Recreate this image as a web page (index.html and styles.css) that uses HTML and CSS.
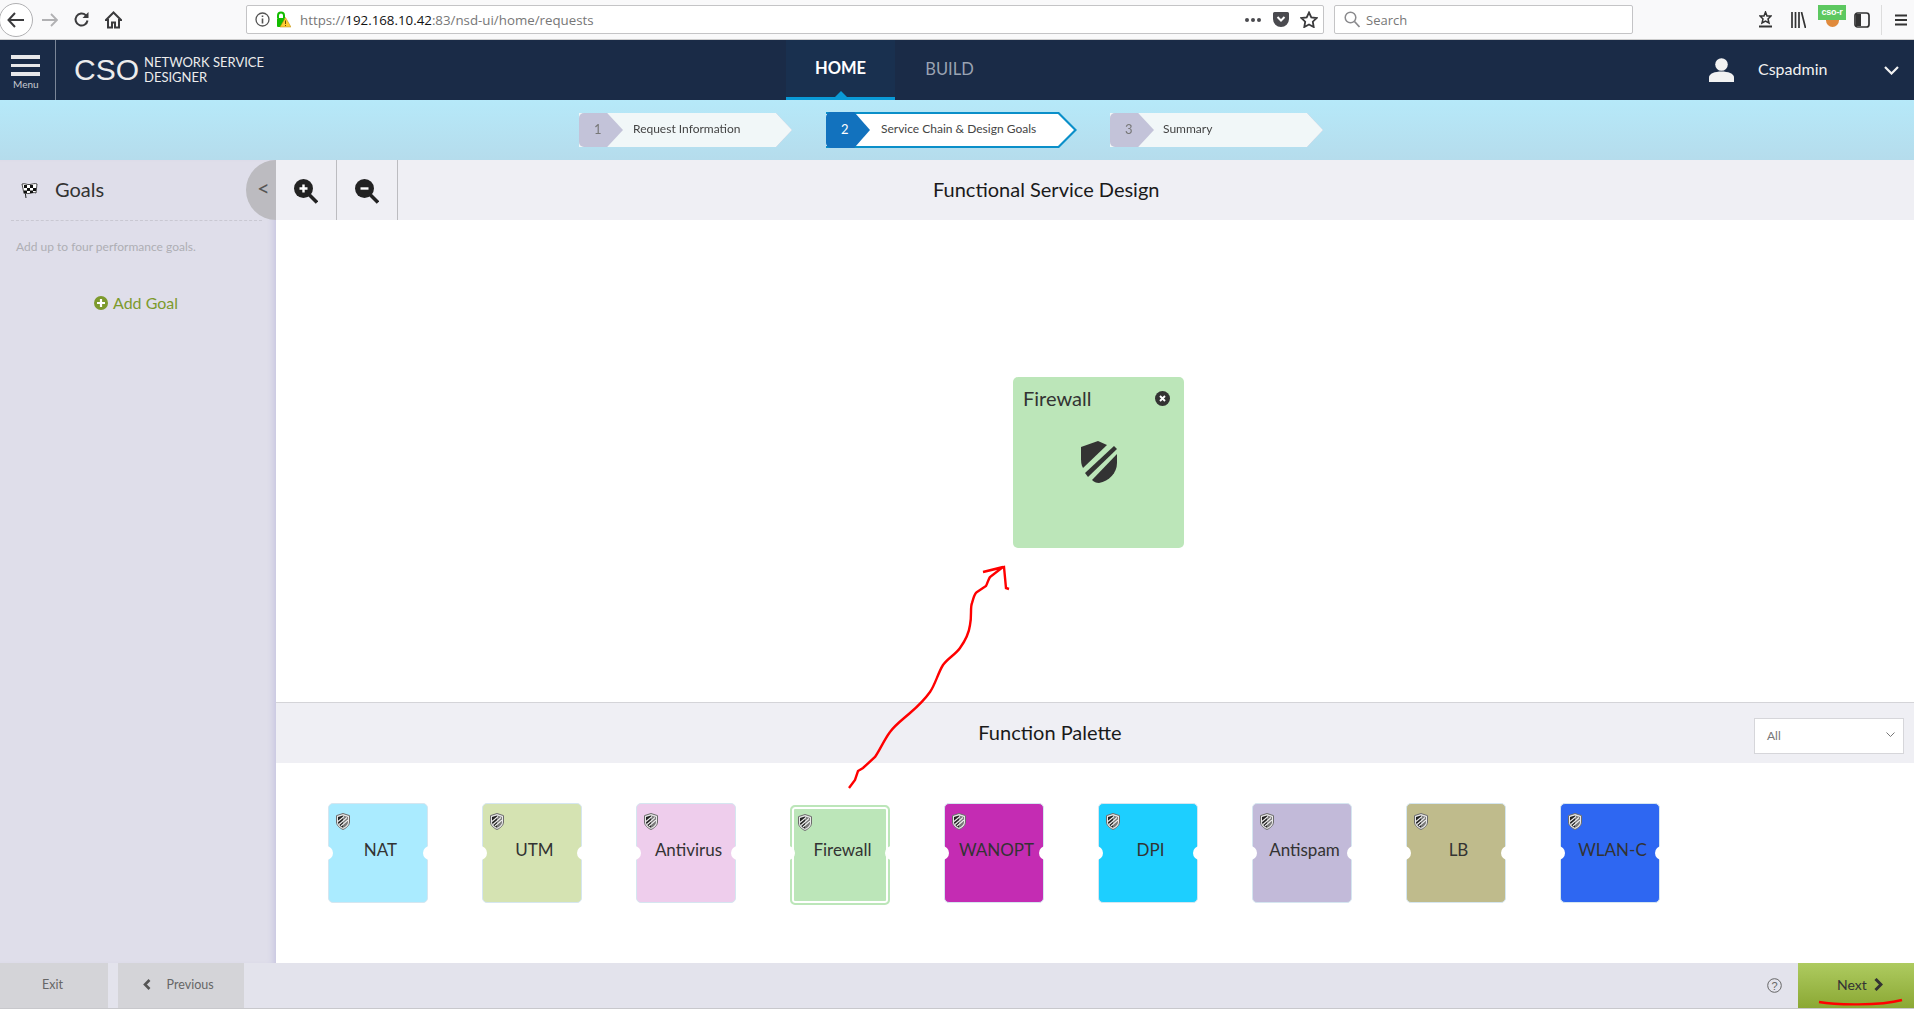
FILE: index.html
```html
<!DOCTYPE html>
<html lang="en">
<head>
<meta charset="utf-8">
<title>CSO Network Service Designer</title>
<link rel="stylesheet" href="styles.css">
</head>
<body>
<svg width="0" height="0" class="defs">
  <defs>
    <symbol id="mini-shield" viewBox="0 0 14 17">
      <path d="M7 .5 13.500 2.600V9c0 3.400-3 6-6.500 7.500C3.500 15 .5 12.400.5 9V2.600Z" fill="#e8e8e8" stroke="#6b6b6b"/>
      <path d="M7 2.500 2 4v5c0 2.500 2.200 4.400 5 5.800Z" fill="#222"/>
      <path d="M7 2.500 12 4v5c0 2.500-2.200 4.400-5 5.800Z" fill="#777"/>
      <path d="M3 11.500 11 4.500M5 13 12 7M2 8.500 8 3.500" stroke="#eee" stroke-width="1.100" fill="none"/>
    </symbol>
  </defs>
</svg>

<div class="browser">
  <div class="back-btn">
    <svg width="18" height="16" viewBox="0 0 18 16"><path d="M8 1 1.500 8 8 15M2 8h15" fill="none" stroke="#3b3b3d" stroke-width="2"/></svg>
  </div>
  <svg class="fwd" width="17" height="14" viewBox="0 0 17 14"><path d="M10 1l6 6-6 6M16 7H1" fill="none" stroke="#b1b1b3" stroke-width="1.800"/></svg>
  <svg class="reload" width="17" height="17" viewBox="0 0 17 17"><path d="M14.500 9.500a6 6 0 1 1-1.700-5.200L14.500 6" fill="none" stroke="#3b3b3d" stroke-width="2"/><path d="M15.500 1v6h-6Z" fill="#3b3b3d"/></svg>
  <svg class="home" width="17" height="18" viewBox="0 0 17 18"><path d="M8.500 1.500 1 9h2v7.500h4v-5h3v5h4V9h2Z" fill="none" stroke="#3b3b3d" stroke-width="2"/></svg>
  <div class="urlbar">
    <svg class="info" width="15" height="15" viewBox="0 0 15 15"><circle cx="7.500" cy="7.500" r="6.500" fill="none" stroke="#555" stroke-width="1.300"/><path d="M7.500 6.500v5M7.500 3.500v1.600" stroke="#555" stroke-width="1.600"/></svg>
    <svg class="lock" width="15" height="17" viewBox="0 0 15 17"><path d="M2 7V4.500a3 3 0 0 1 6 0V7" fill="none" stroke="#12bc00" stroke-width="2"/><rect x="1" y="7" width="8" height="9" rx="1" fill="#12bc00"/><path d="M9.500 6.500 15 16H4Z" fill="#ffcc33" stroke="#b98a10" stroke-width=".5"/><path d="M9.500 9.500v3.500M9.500 14v1" stroke="#6b4a00" stroke-width="1"/></svg>
    <div class="url"><span class="url-dim">https://</span><span class="url-host">192.168.10.42</span><span class="url-dim">:83/nsd-ui/home/requests</span></div>
    <div class="url-dots"><i></i><i></i><i></i></div>
    <svg class="pocket" width="16" height="15" viewBox="0 0 16 15"><path d="M1.500 0h13A1.500 1.500 0 0 1 16 1.500V7A8 8 0 0 1 0 7V1.500A1.500 1.500 0 0 1 1.500 0Z" fill="#4a4a4f"/><path d="M4.500 5 8 8.500 11.500 5" fill="none" stroke="#fff" stroke-width="2"/></svg>
    <svg class="star" width="18" height="17" viewBox="0 0 18 17"><path d="M9 1.500 11.300 6.300 16.600 7 12.800 10.700 13.700 16 9 13.500 4.300 16 5.200 10.700 1.400 7 6.700 6.300Z" fill="none" stroke="#3b3b3d" stroke-width="1.800"/></svg>
  </div>
  <div class="searchbar">
    <svg width="16" height="17" viewBox="0 0 16 17"><circle cx="6.500" cy="6.500" r="5.300" fill="none" stroke="#8a8a8d" stroke-width="1.500"/><path d="M10.500 10.500 15.500 16" stroke="#8a8a8d" stroke-width="1.700"/></svg>
    <span>Search</span>
  </div>
  <div class="toolbar">
    <svg class="t-dl" width="13" height="17" viewBox="0 0 13 17"><path d="M6.500 1 8 5h4L9 8l1 4-3.500-2L3 12l1-4-3-3h4Z" fill="none" stroke="#333" stroke-width="1.500"/><path d="M0 15.500h13" stroke="#333" stroke-width="2"/></svg>
    <svg class="t-lib" width="15" height="16" viewBox="0 0 15 16"><path d="M1 0v16M4.500 0v16M8 0v16M10.500 0l4 16" stroke="#333" stroke-width="1.700" fill="none"/></svg>
    <div class="t-ext"><div class="t-badge">cso-r</div><div class="t-ext-dot"></div></div>
    <svg class="t-side" width="16" height="16" viewBox="0 0 16 16"><rect x="1" y="1" width="14" height="14" rx="2.500" fill="none" stroke="#333" stroke-width="1.700"/><rect x="2" y="2" width="5" height="12" fill="#333"/></svg>
    <div class="t-sep"></div>
    <svg class="t-menu" width="12" height="12" viewBox="0 0 12 12"><path d="M0 1.500h12M0 6h12M0 10.500h12" stroke="#333" stroke-width="2"/></svg>
  </div>
</div>

<header class="navbar">
  <div class="menu-btn">
    <div class="burger"><i></i><i></i><i></i></div>
    <div class="menu-label">Menu</div>
  </div>
  <div class="brand">
    <span class="brand-cso">CSO</span>
    <span class="brand-sub">NETWORK SERVICE<br>DESIGNER</span>
  </div>
  <nav class="tabs">
    <div class="tab tab-active">HOME</div>
    <div class="tab">BUILD</div>
  </nav>
  <div class="user">
    <svg width="25" height="24" viewBox="0 0 25 24"><circle cx="12.500" cy="6.500" r="6.300" fill="#f2f2f2"/><path d="M0 24v-4.500C0 15.500 6 13.500 12.500 13.500S25 15.500 25 19.500V24Z" fill="#f2f2f2"/></svg>
    <span class="user-name">Cspadmin</span>
    <svg class="user-chev" width="15" height="9" viewBox="0 0 15 9"><path d="M1 1l6.500 6.500L14 1" fill="none" stroke="#f2f2f2" stroke-width="2.200"/></svg>
  </div>
</header>

<div class="stepper">
  <div class="step">
    <div class="step-num">1</div>
    <div class="step-label">Request Information</div>
  </div>
  <div class="step step-current">
    <div class="step-num">2</div>
    <div class="step-label">Service Chain &amp; Design Goals</div>
  </div>
  <div class="step step-last">
    <div class="step-num">3</div>
    <div class="step-label">Summary</div>
  </div>
</div>

<div class="workspace">
  <aside class="sidebar">
    <div class="goals-head">
      <svg width="17" height="18" viewBox="0 0 17 18"><path d="M3 3 5 17" stroke="#222" stroke-width="1"/><path d="M1 3c3-1 5 1 8 .5s5-1.500 7-.5l-1 9c-2-1-4 0-7 .5S4 11.500 3 12.500Z" fill="#fff" stroke="#222" stroke-width=".8"/><path d="M3 4h3v3H3ZM9 4h3v3H9ZM6 7h3v3H6ZM12 7h3v3h-3ZM3 9.500h3v2.500H3ZM9 9.500h3v2.500H9Z" fill="#111"/></svg>
      <span class="goals-title">Goals</span>
      <div class="collapse">&lt;</div>
    </div>
    <p class="goals-help">Add up to four performance goals.</p>
    <div class="add-goal">
      <svg width="14" height="14" viewBox="0 0 14 14"><circle cx="7" cy="7" r="7" fill="#7d9a2d"/><path d="M7 3v8M3 7h8" stroke="#fff" stroke-width="2.200"/></svg>
      <span>Add Goal</span>
    </div>
  </aside>

  <main class="main">
    <div class="design-bar">
      <div class="zoom-btn">
        <svg width="24" height="25" viewBox="0 0 24 25"><circle cx="9.500" cy="9.500" r="9.500" fill="#222"/><path d="M15.500 16 23 23.500" stroke="#222" stroke-width="3.500"/><path d="M9.500 5.500v8M5.500 9.500h8" stroke="#fff" stroke-width="2.400"/></svg>
      </div>
      <div class="zoom-btn">
        <svg width="24" height="25" viewBox="0 0 24 25"><circle cx="9.500" cy="9.500" r="9.500" fill="#222"/><path d="M15.500 16 23 23.500" stroke="#222" stroke-width="3.500"/><path d="M5.500 9.500h8" stroke="#fff" stroke-width="2.400"/></svg>
      </div>
      <h2 class="section-title design-title">Functional Service Design</h2>
    </div>
    <div class="canvas">
      <div class="node">
        <div class="node-head">
          <span class="node-name">Firewall</span>
          <svg width="15" height="15" viewBox="0 0 15 15"><circle cx="7.500" cy="7.500" r="7.500" fill="#333"/><path d="M5 5l5 5M10 5l-5 5" stroke="#fff" stroke-width="1.900"/></svg>
        </div>
        <svg class="node-shield" width="36" height="42" viewBox="0 0 36 42">
          <path d="M36 13V22C36 32 28 40 18 42 15 42 13 41 11 39Z" fill="#333"/>
          <path d="M0 6 17 0 26 4 2 27C0 24 0 20 0 16Z" fill="#333"/>
          <path d="M33 5 36 8 7 36 4 32Z" fill="#333"/>
        </svg>
      </div>
    </div>
    <div class="palette-bar">
      <h2 class="section-title">Function Palette</h2>
      <div class="filter">
        <span>All</span>
        <svg width="9" height="6" viewBox="0 0 9 6"><path d="M.5.500 4.500 4.500 8.500.5" fill="none" stroke="#777" stroke-width="1"/></svg>
      </div>
    </div>
    <div class="palette">
      <div class="fn fn-nat"><svg class="fn-icon"><use href="#mini-shield"/></svg><span>NAT</span></div>
      <div class="fn fn-utm"><svg class="fn-icon"><use href="#mini-shield"/></svg><span>UTM</span></div>
      <div class="fn fn-av"><svg class="fn-icon"><use href="#mini-shield"/></svg><span>Antivirus</span></div>
      <div class="fn fn-fw"><svg class="fn-icon"><use href="#mini-shield"/></svg><span>Firewall</span></div>
      <div class="fn fn-wan"><svg class="fn-icon"><use href="#mini-shield"/></svg><span>WANOPT</span></div>
      <div class="fn fn-dpi"><svg class="fn-icon"><use href="#mini-shield"/></svg><span>DPI</span></div>
      <div class="fn fn-as"><svg class="fn-icon"><use href="#mini-shield"/></svg><span>Antispam</span></div>
      <div class="fn fn-lb"><svg class="fn-icon"><use href="#mini-shield"/></svg><span>LB</span></div>
      <div class="fn fn-wlan"><svg class="fn-icon"><use href="#mini-shield"/></svg><span>WLAN-C</span></div>
    </div>
  </main>
</div>

<footer class="footer">
  <div class="foot-btn foot-exit">Exit</div>
  <div class="foot-btn foot-prev">
    <svg width="8" height="11" viewBox="0 0 8 11"><path d="M6.500 1 2 5.500 6.500 10" fill="none" stroke="#555" stroke-width="2.600"/></svg>
    <span>Previous</span>
  </div>
  <svg class="help" width="15" height="15" viewBox="0 0 15 15"><circle cx="7.500" cy="7.500" r="6.800" fill="none" stroke="#666" stroke-width="1"/><text x="7.500" y="11.500" text-anchor="middle" class="help-q">?</text></svg>
  <div class="foot-next">
    <span>Next</span>
    <svg width="9" height="13" viewBox="0 0 9 13"><path d="M1.500 1 7 6.500 1.500 12" fill="none" stroke="#333" stroke-width="3"/></svg>
  </div>
</footer>

<svg class="ink" width="1914" height="1010" viewBox="0 0 1914 1010">
  <path d="M849 788 855 780 858 771 863 768 875 757C880 750 884 740 890 732 895 725 902 720 910 713 917 707 925 699 930 692 935 685 938 673 943 665 948 658 955 655 960 648 965 641 969 633 970 625 972 615 970 608 972 603 974 597 974 594 977 592L986 586C988 582 988 580 990 577L1003 567 983 572 1004 567 1006 588 1009 589" fill="none" stroke="#f00" stroke-width="2.400"/>
  <path d="M1819 1002C1835 1005 1880 1006 1902 1000" fill="none" stroke="#f00" stroke-width="2.400"/>
</svg>
</body>
</html>
```
FILE: styles.css
```css
* { box-sizing: border-box; }
html, body { margin: 0; padding: 0; }
body {
  width: 1914px;
  height: 1010px;
  overflow: hidden;
  position: relative;
  background: #fff;
  font-family: "Lato", "Liberation Sans", sans-serif;
  color: #333;
  display: flex;
  flex-direction: column;
}
.defs { position: absolute; }

/* browser chrome */
.browser {
  height: 40px;
  flex: none;
  display: flex;
  align-items: center;
  background: #f9f9fa;
  border-bottom: 1px solid #ccc;
  position: relative;
}
.back-btn {
  width: 34px;
  height: 34px;
  margin-left: -1px;
  border: 1px solid #b1b1b3;
  border-radius: 50%;
  background: #fff;
  display: flex;
  align-items: center;
  justify-content: center;
  flex: none;
}
.fwd { margin-left: 8px; flex: none; }
.reload { margin-left: 15px; flex: none; }
.home { margin-left: 15px; flex: none; }
.urlbar {
  margin-left: 124px;
  width: 1078px;
  height: 29px;
  flex: none;
  background: #fff;
  border: 1px solid #c4c4c6;
  border-radius: 2px;
  display: flex;
  align-items: center;
  padding-left: 8px;
}
.lock { margin-left: 6px; }
.url {
  margin-left: 9px;
  font-family: "Open Sans", "Liberation Sans", sans-serif;
  font-size: 13.300px;
  white-space: nowrap;
  flex: 1;
}
.url-dim { color: #777; }
.url-host { color: #111; }
.url-dots { display: flex; gap: 2px; margin-right: 12px; }
.url-dots i { display: block; width: 4px; height: 4px; border-radius: 50%; background: #4a4a4f; }
.pocket { margin-right: 11px; }
.star { margin-right: 5px; }
.searchbar {
  margin-left: 10px;
  width: 299px;
  height: 29px;
  flex: none;
  background: #fff;
  border: 1px solid #c4c4c6;
  border-radius: 2px;
  display: flex;
  align-items: center;
  gap: 6px;
  padding-left: 9px;
  font-family: "Open Sans", "Liberation Sans", sans-serif;
  font-size: 13px;
  color: #777;
}
.toolbar { flex: 1; display: flex; align-items: center; position: relative; height: 100%; }
.t-dl { margin-left: 126px; flex: none; }
.t-lib { margin-left: 19px; flex: none; }
.t-ext { margin-left: 12px; width: 28px; height: 32px; flex: none; position: relative; }
.t-badge {
  background: #5dc860;
  color: #fff;
  font-family: "Liberation Sans", sans-serif;
  font-size: 9px;
  font-weight: 700;
  line-height: 15px;
  height: 15px;
  text-align: center;
  margin-top: 1px;
  letter-spacing: -0.2px;
}
.t-ext-dot { width: 13px; height: 7px; margin: 0 auto; border-radius: 0 0 7px 7px; background: #e08a3c; }
.t-side { margin-left: 8px; flex: none; }
.t-sep { width: 1px; height: 30px; background: #ddd; margin-left: 11px; flex: none; }
.t-menu { margin-left: 13px; flex: none; }

/* navbar */
.navbar {
  height: 60px;
  flex: none;
  background: #1a2b47;
  display: flex;
  color: #f2f2f2;
}
.menu-btn {
  width: 56px;
  border-right: 1px solid #7b8698;
  padding: 15px 0 0 11px;
}
.burger { width: 29px; display: flex; flex-direction: column; gap: 5px; }
.burger i { display: block; height: 3.500px; background: #e8e8ea; }
.menu-label { font-size: 10px; color: #c6cad2; margin: 2px 0 0 2px; line-height: 12px; }
.brand { display: flex; align-items: center; margin-left: 18px; width: 205px; }
.brand-cso { font-family: "Liberation Sans", sans-serif; font-size: 30px; color: #ececec; line-height: 1; }
.brand-sub { font-size: 13px; line-height: 15px; margin-left: 5px; color: #ececec; white-space: nowrap; }
.tabs { display: flex; margin-left: 507px; }
.tab {
  width: 109px;
  font-size: 16.500px;
  color: #9aa3b2;
  display: flex;
  align-items: center;
  justify-content: center;
  padding-bottom: 3px;
  position: relative;
}
.tab-active {
  background: #19304f;
  color: #fff;
  font-weight: 700;
  padding-bottom: 1px;
  border-bottom: 3px solid #0a9ad6;
}
.tab-active::after {
  content: "";
  position: absolute;
  left: 50%;
  bottom: 0;
  margin-left: -6px;
  border: 6px solid transparent;
  border-top: 0;
  border-bottom: 6px solid #0a9ad6;
}
.user { margin-left: auto; display: flex; align-items: center; padding-right: 15px; }
.user-name { font-size: 16px; margin: 0 0 3px 24px; width: 126px; }

/* stepper */
.stepper {
  height: 60px;
  flex: none;
  background: linear-gradient(#b6e9f9, #b5dcec);
  display: flex;
  align-items: center;
  padding-left: 579px;
}
.step {
  width: 213px;
  height: 34px;
  flex: none;
  display: flex;
  position: relative;
  margin-right: 34px;
  filter: drop-shadow(0 0 .6px #b5b3cf);
}
.step-num {
  width: 44px;
  background: #c3c3d9;
  border-radius: 5px 0 0 5px;
  color: #777;
  font-size: 13px;
  padding-left: 15px;
  line-height: 33px;
  flex: none;
  clip-path: polygon(0 0, 64% 0, 100% 50%, 64% 100%, 0 100%);
  position: relative;
  z-index: 1;
}
.step-label {
  flex: 1;
  margin-left: -44px;
  padding-left: 54px;
  background: #f1f7f8;
  clip-path: polygon(0 0, calc(100% - 16px) 0, 100% 50%, calc(100% - 16px) 100%, 0 100%);
  font-size: 12px;
  line-height: 31px;
  color: #444;
  white-space: nowrap;
}
.step-current { width: 251px; height: 36px; margin-right: 33px; filter: none; }
.step-current .step-num {
  background: #1272be;
  color: #fff;
  line-height: 35px;
}
.step-current .step-label {
  position: relative;
  isolation: isolate;
  line-height: 34px;
  padding-left: 55px;
  background: #0a8fc9;
  clip-path: polygon(0 0, calc(100% - 18px) 0, 100% 50%, calc(100% - 18px) 100%, 0 100%);
}
.step-current .step-label::before {
  content: "";
  position: absolute;
  inset: 0;
  z-index: -1;
  background: #fff;
  clip-path: polygon(0 2px, calc(100% - 19px) 2px, calc(100% - 3px) 50%, calc(100% - 19px) calc(100% - 2px), 0 calc(100% - 2px));
}
.step-last { margin-right: 0; }
.step-last .step-label { padding-left: 53px; }

/* workspace */
.workspace { height: 803px; flex: none; display: flex; }
.sidebar {
  width: 276px;
  flex: none;
  background: #dfdeea;
  box-shadow: inset -7px 0 7px -5px #c4c2df;
  padding: 0 14px 0 11px;
}
.goals-head {
  height: 61px;
  border-bottom: 1px dashed #c9c8d2;
  display: flex;
  align-items: center;
  padding-left: 10px;
  position: relative;
}
.goals-title { font-size: 20px; margin: 0 0 2px 17px; color: #333; }
.collapse {
  position: absolute;
  left: 235px;
  top: 0;
  width: 30px;
  height: 60px;
  background: #bcbbc0;
  border-radius: 30px 0 0 30px;
  color: #555;
  font-size: 22px;
  line-height: 56px;
  padding-left: 11px;
}
.goals-help { margin: 19px 0 0 5px; font-size: 12px; line-height: 14px; color: #aeaeb4; }
.add-goal {
  margin: 39px 0 0 83px;
  display: flex;
  align-items: center;
  gap: 5px;
  font-size: 16px;
  color: #7d9a2d;
  line-height: 20px;
}

.main { flex: 1; display: flex; flex-direction: column; min-width: 0; }
.section-title { margin: 0 0 2px; font-size: 20px; font-weight: 400; color: #1a1a1a; }
.design-bar {
  height: 60px;
  flex: none;
  background: #efeff4;
  display: flex;
  align-items: center;
}
.zoom-btn {
  width: 61px;
  height: 60px;
  flex: none;
  border-right: 1px solid #bcbcc0;
  display: flex;
  align-items: center;
  justify-content: center;
  padding: 2px 1px 0 0;
}
.design-title { margin-left: 535px; }
.canvas { height: 482px; flex: none; position: relative; }
.node {
  position: absolute;
  left: 737px;
  top: 157px;
  width: 171px;
  height: 171px;
  background: #bce6b9;
  border-radius: 5px;
  padding: 9px 10px;
}
.node-head {
  display: flex;
  align-items: center;
  justify-content: space-between;
  padding-right: 4px;
  font-size: 20px;
  line-height: 24px;
  color: #333;
}
.node-name { margin-bottom: 1px; }
.node-shield { display: block; margin: 30px 0 0 58px; }
.palette-bar {
  height: 61px;
  flex: none;
  background: #efeff4;
  border-top: 1px solid #d4d4d8;
  display: flex;
  align-items: center;
  justify-content: center;
  position: relative;
  padding-right: 90px;
}
.filter {
  position: absolute;
  left: 1478px;
  top: 15px;
  width: 150px;
  height: 36px;
  background: #fff;
  border: 1px solid #d6d6da;
  display: flex;
  align-items: center;
  justify-content: space-between;
  padding: 0 8px 2px 12px;
  font-size: 12px;
  color: #777;
}
.palette {
  flex: 1;
  display: flex;
  gap: 54px;
  padding: 40px 0 0 52px;
}
.fn {
  width: 100px;
  height: 100px;
  flex: none;
  border-radius: 5px;
  border: 1px solid #d5e6f0;
  position: relative;
  display: flex;
  justify-content: center;
  padding: 35px 0 0 5px;
  font-size: 17px;
  line-height: 22px;
  color: #333;
}
.fn::before, .fn::after {
  content: "";
  position: absolute;
  top: 42px;
  width: 14px;
  height: 14px;
  border-radius: 50%;
  background: #fff;
}
.fn::before { left: -10px; }
.fn::after { right: -10px; }
.fn-icon { position: absolute; left: 7px; top: 9px; width: 14px; height: 17px; }
.fn-nat { background: #aaebff; }
.fn-utm { background: #d5e3b2; }
.fn-av { background: #eecdec; }
.fn-fw {
  background: #bce6b9;
  border: 2px solid #bce6b9;
  box-shadow: inset 0 0 0 2px #fff;
  margin-top: 2px;
  padding-top: 32px;
}
.fn-fw .fn-icon { left: 6px; top: 7px; }
.fn-fw::before { top: 39px; left: -11px; }
.fn-fw::after { top: 39px; right: -11px; }
.fn-wan { background: #c42cb3; }
.fn-dpi { background: #1dcfff; }
.fn-as { background: #c2bad9; }
.fn-lb { background: #bfbb8c; }
.fn-wlan { background: #2e67f2; }

/* footer */
.footer {
  height: 46px;
  flex: none;
  background: #e3e3ec;
  border-bottom: 1px solid #c8c8cc;
  display: flex;
  align-items: stretch;
  font-size: 12.500px;
  color: #666;
}
.foot-btn { background: #d4d4d8; display: flex; align-items: center; padding-bottom: 2px; }
.foot-exit { width: 108px; padding-left: 42px; }
.foot-prev { width: 127px; margin-left: 10px; padding-left: 25px; gap: 16px; }
.help { margin: 15px 0 0 1523px; flex: none; }
.help-q { font-family: "Liberation Sans", sans-serif; font-size: 11px; fill: #666; }
.foot-next {
  margin-left: 16px;
  width: 116px;
  flex: none;
  background: linear-gradient(#aecb60, #8ba834);
  display: flex;
  align-items: center;
  gap: 7px;
  padding: 0 0 2px 39px;
  color: #333;
  font-size: 14px;
}

/* red annotation pen strokes */
.ink { position: absolute; left: 0; top: 0; pointer-events: none; }
```
